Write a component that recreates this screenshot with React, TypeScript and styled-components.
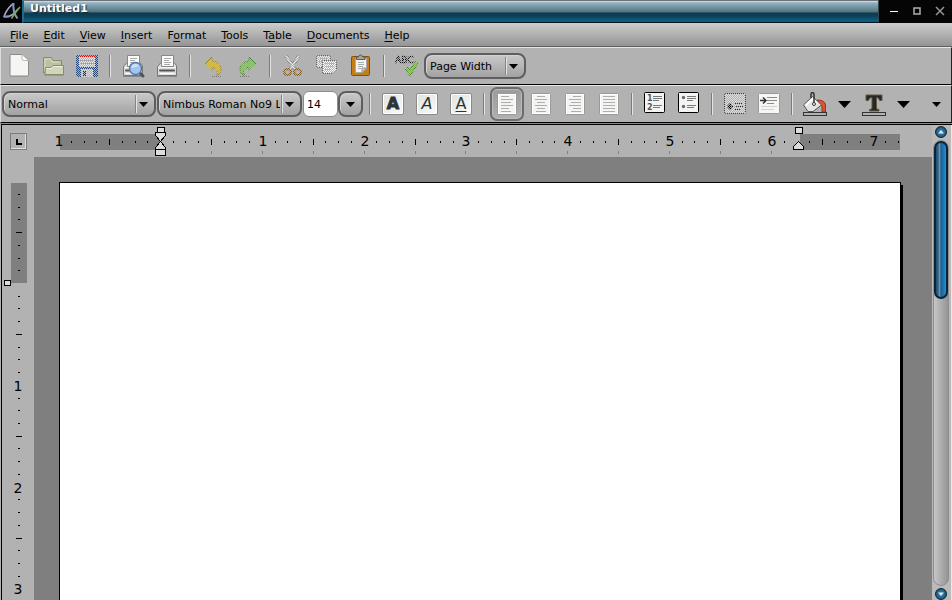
import React from "react";
import styled, { createGlobalStyle, css } from "styled-components";

const GlobalStyle = createGlobalStyle`
  * { box-sizing: border-box; }
  html, body, #root { height: 100%; }
  body { margin: 0; overflow: hidden; background: #b2b2b2; }
  body, button, input, select, textarea {
    font-family: "DejaVu Sans", sans-serif;
    font-size: 11px;
    color: #000;
  }
  button { border: 0; padding: 0; background: none; }
  svg { display: block; flex: none; }
`;

const AppWindow = styled.div`
  display: flex;
  flex-direction: column;
  height: 100vh;
`;

const TitleBar = styled.header`
  display: flex;
  height: 23px;
  background: #050505;
`;

const LogoBox = styled.div`
  width: 22px;
  flex: none;
`;

const TitleStrip = styled.h1`
  flex: 1;
  margin: 0;
  padding: 0 6px;
  font-size: 11px;
  line-height: 15px;
  font-weight: bold;
  color: #fff;
  text-shadow: 1px 1px 1px #123;
  border-top: 1px solid #6f7277;
  border-left: 2px solid #1d6a8e;
  border-right: 1px solid #33444c;
  border-bottom: 1px solid #04161e;
  background: linear-gradient(to bottom, #cfe4ee 0, #8fb0bf 2px, #6d8f9e 7px, #55707b 11px, #0b3c50 12px, #0a4158 15px, #0f5f82 20px, #0d4d68 22px);
`;

const WindowButtons = styled.div`
  display: flex;
  align-items: center;
  width: 73px;
  padding: 0 0 2px 3px;
`;

const WindowButton = styled.button`
  display: grid;
  place-items: center;
  width: 23px;
  height: 20px;
`;

const MenuBar = styled.nav`
  display: flex;
  align-items: center;
  gap: 1px;
  height: 24px;
  padding: 1px 3px 0;
  background: linear-gradient(#cdcdcd, #949494);
  border-bottom: 1px solid #606060;
`;

const MenuItem = styled.button`
  height: 22px;
  padding: 0 7px;
  white-space: nowrap;
  u { text-underline-offset: 2px; }
`;

const Toolbar = styled.div`
  display: flex;
  align-items: center;
  height: 38px;
  padding-left: 1px;
  background: #b2b2b2;
  border-top: 1px solid #e6e6e6;
  border-left: 1px solid #dcdcdc;
  border-bottom: 1px solid #000;
  border-right: 1px solid #222;
`;

const Divider = styled.span`
  width: 2px;
  height: 22px;
  margin: 0 5px;
  flex: none;
  background: linear-gradient(to right, #7b7b7b 50%, #e4e4e4 50%);
`;

const ToolButton = styled.button<{ $off?: boolean; $on?: boolean }>`
  display: grid;
  place-items: center;
  width: 34px;
  height: 34px;
  flex: none;
  ${(p) => p.$on && css`
    border: 2px solid #6c6c6c;
    border-radius: 7px;
    background: linear-gradient(#9a9a9a, #b0b0b0);
    box-shadow: inset 0 0 1px 1px #bcbcbc;
  `}
  ${(p) => p.$off && css`
    svg {
      mask-image: repeating-conic-gradient(#000 0 25%, transparent 0 50%);
      mask-size: 2px 2px;
    }
  `}
`;

const ArrowButton = styled.button`
  display: grid;
  place-items: center;
  width: 25px;
  height: 34px;
  flex: none;
`;

const OverflowButton = styled(ArrowButton)`
  margin-left: auto;
  margin-right: 2px;
`;

const raised = css`
  border: 2px solid #5e5e5e;
  border-radius: 8px;
  background: linear-gradient(#c9c9c9, #a2a2a2);
  box-shadow: inset 1px 1px 0 #d2d2d2;
`;

const Combo = styled.label<{ $w: number }>`
  display: grid;
  align-items: center;
  width: ${(p) => p.$w}px;
  height: 26px;
  margin-right: 1px;
  flex: none;
  ${raised}
  > * { grid-area: 1 / 1; }
`;

const ComboSelect = styled.select`
  appearance: none;
  width: 100%;
  height: 22px;
  padding: 0 20px 0 4px;
  border: 0;
  background: none;
`;

const ComboArrow = styled.span`
  display: flex;
  align-items: center;
  justify-self: end;
  gap: 2px;
  padding-right: 6px;
  pointer-events: none;
`;

const ComboLine = styled.span`
  width: 2px;
  height: 18px;
  background: linear-gradient(to right, #858585 50%, #e4e4e4 50%);
`;

const SizeInput = styled.input`
  width: 35px;
  height: 26px;
  flex: none;
  padding: 0 3px;
  border: 1px solid #8c8c8c;
  border-radius: 6px;
  background: #fff;
`;

const SizeButton = styled.button`
  display: grid;
  place-items: center;
  width: 25px;
  height: 26px;
  flex: none;
  margin-right: 1px;
  ${raised}
`;

const Workspace = styled.main`
  display: grid;
  flex: 1;
  min-height: 0;
  grid-template-columns: 32px 1fr 20px;
  grid-template-rows: 32px 1fr;
  border-left: 1px solid #000;
  border-top: 1px solid #000;
  margin-left: 1px;
  background: #b2b2b2;
`;

const Seam = styled.div`
  height: 1px;
  background: #8a8a8a;
`;

const Corner = styled.div`
  display: grid;
  place-items: start;
  padding: 8px 0 0 8px;
`;

const TabTypeButton = styled.button`
  display: grid;
  place-items: center;
  width: 17px;
  height: 17px;
  border: 1px solid #7c7c7c;
  box-shadow: inset -1px -1px 0 #e2e2e2;
`;

const RulerBox = styled.div`
  min-width: 0;
  min-height: 0;
  overflow: hidden;
`;

const ScrollColumn = styled.div`
  display: flex;
  flex-direction: column;
  align-items: center;
  grid-column: 3;
  grid-row: 1 / 3;
  min-height: 0;
  padding: 1px 3px 0 1px;
  background: #bababa;
  border-right: 1px solid #e8e8e8;
`;

const ScrollArrow = styled.button`
  display: grid;
  place-items: center;
  width: 12px;
  height: 12px;
  flex: none;
  border-radius: 50%;
  border: 1px solid #0c2233;
  background: radial-gradient(#3c8cbb, #12405f);
`;

const Trough = styled.div`
  flex: 1;
  width: 16px;
  margin: 2px 0;
  border: 1px solid #8e8e8e;
  border-radius: 8px;
  background: linear-gradient(to right, #c6c6c6, #949494);
`;

const Thumb = styled.div`
  height: 35.5%;
  border: 2px solid #0b2335;
  border-radius: 7px;
  background: linear-gradient(to right, #1d4f78 0, #34607f 20%, #6b92ac 35%, #1e5f90 50%, #1b78b8 75%, #2391d6 100%);
`;

const Canvas = styled.div`
  display: flex;
  min-width: 0;
  min-height: 0;
  padding: 25px 31px 0 25px;
  background: #7f7f7f;
  overflow: hidden;
`;

const Page = styled.textarea`
  flex: 1;
  min-width: 0;
  padding: 96px;
  resize: none;
  outline: 0;
  border: 1px solid #000;
  border-bottom: 0;
  border-radius: 0;
  background: #fff;
  box-shadow: 2px 3px 0 #000;
  font-family: "Liberation Serif", serif;
  font-size: 19px;
`;

const Icon = ({ children, size = 24 }: { children: React.ReactNode; size?: number }) => (
  <svg width={size} height={size} viewBox={`0 0 ${size} ${size}`} fill="none" aria-hidden="true">
    {children}
  </svg>
);

const Arrow = ({ w, h }: { w: number; h: number }) => (
  <svg width={w} height={h} viewBox={`0 0 ${w} ${h}`} aria-hidden="true">
    <path d={`M0 0H${w}L${w / 2} ${h}Z`} fill="#000" />
  </svg>
);

const Logo = () => (
  <svg width="22" height="22" viewBox="0 0 22 22" fill="none" role="img" aria-label="AbiWord">
    <path d="M13.500 3.500C10 6 6 11 4 16.500C8 17.500 13 15.500 18 9" stroke="#9aabc8" strokeWidth="1.600" />
    <path d="M13.500 3C13 8 14 14 17.500 18.500M4 16.500L9.500 16.500" stroke="#7f97c2" strokeWidth="2" />
    <path d="M20 7L14 14.500L11.500 18.500" stroke="#7da65a" strokeWidth="1.600" />
  </svg>
);

const NewIcon = () => (
  <Icon>
    <path d="M4 .5H15L21.500 6V21a1 1 0 0 1-1 1H4a1 1 0 0 1-1-1V1.500a1 1 0 0 1 1-1Z" fill="#f5f5f3" stroke="#8a8a86" />
    <path d="M15 .5V5q0 1.500 2 1.500H21.500Z" fill="#fff" stroke="#b8b8b4" />
    <path d="M3 22.500H21" stroke="#999" />
  </Icon>
);

const OpenIcon = () => (
  <Icon>
    <path d="M2.500 19V4q0-.5.5-.5H10L12 6.500H20.500V19Z" fill="#bcc2a0" stroke="#858b6d" />
    <path d="M4 17V5H9.500L11 8H19" stroke="#d9dec4" />
    <path d="M4.500 13.500H10L12 11.500H22.500V20.500H4Z" fill="#d0d6b8" stroke="#858b6d" />
    <path d="M5.500 14.500H11L12.500 12.500H21.500" stroke="#eef1df" />
    <path d="M3 21.500H23" stroke="#999" />
  </Icon>
);

const SaveIcon = () => (
  <Icon>
    <path d="M1 1H23V23H3L1 21Z" fill="#264a7c" />
    <path d="M4 2H20V13H4Z" fill="#e6e6e6" />
    <path d="M4 1H20V3H4Z" fill="#d01818" />
    <path d="M5 6.500H19M5 9.500H19" stroke="#999" />
    <path d="M6 15H18V23H6Z" fill="#ddd" />
    <path d="M8 17H11V22H8Z" fill="#234" />
  </Icon>
);

const PrinterBody = () => (
  <>
    <path d="M3.500 11.500L6 8.500H19L21.500 11.500V21.500H2.500V13Z" fill="#dcdcda" stroke="#777" />
    <path d="M6.500 12.500V1.500H18.500V12.500Z" fill="#fafafa" stroke="#888" />
    <path d="M9 4.500H16M9 6.500H14M9 8.500H16M9 10.500H15" stroke="#aaa" />
    <path d="M3 13.500H21" stroke="#f4f4f4" />
    <path d="M5 16.500H19" stroke="#555" strokeWidth="2" strokeLinecap="round" />
    <path d="M5 19.500H19" stroke="#fff" />
    <path d="M2 22.500H22" stroke="#888" />
  </>
);

const PrintIcon = () => <Icon><PrinterBody /></Icon>;

const PreviewIcon = () => (
  <Icon>
    <PrinterBody />
    <path d="M18.500 18.500L22 22" stroke="#4c5358" strokeWidth="3" strokeLinecap="round" />
    <circle cx="14.500" cy="14.500" r="6" fill="#a3c5eb" stroke="#5279a9" strokeWidth="1.500" />
    <path d="M10.500 14a4 4 0 0 1 4-4q3 0 3.500 2Z" fill="#cfe1f6" />
  </Icon>
);

const UndoIcon = () => (
  <Icon>
    <path d="M4 10L11 3V7Q20 8 20 15Q20 20 15 22Q18 17 15 15Q13 13 11 13.500V17Z" fill="#d3bb45" stroke="#978035" />
    <path d="M10 22.500H20" stroke="#777" />
  </Icon>
);

const RedoIcon = () => (
  <Icon>
    <path d="M21 10L14 3V7Q5 8 5 15Q5 20 10 22Q7 17 10 15Q12 13 14 13.500V17Z" fill="#83b862" stroke="#4b7f33" />
    <path d="M5 22.500H15" stroke="#777" />
  </Icon>
);

const CutIcon = () => (
  <Icon>
    <path d="M5 2L14.500 16M18 2L8.500 16" stroke="#888" strokeWidth="4" />
    <path d="M5 2L14.500 16M18 2L8.500 16" stroke="#eee" strokeWidth="2" />
    <ellipse cx="6.500" cy="18" rx="3.500" ry="3" stroke="#7f5522" strokeWidth="2" />
    <ellipse cx="16.500" cy="18" rx="3.500" ry="3" stroke="#7f5522" strokeWidth="2" />
  </Icon>
);

const CopyIcon = () => (
  <Icon>
    <rect x="1.500" y="1.500" width="14" height="12" rx="1" fill="#eee" stroke="#666" />
    <path d="M4 4.500H13M4 7.500H13" stroke="#aaa" />
    <path d="M7.500 6.500H21.500V16L17 19.500H7.500Z" fill="#fff" stroke="#666" />
    <path d="M10 9.500H19M10 12.500H19M10 15.500H16" stroke="#bbb" />
  </Icon>
);

const PasteIcon = () => (
  <Icon>
    <rect x="2.500" y="2.500" width="18" height="19" rx="1" fill="#c47d17" stroke="#85500b" />
    <path d="M6.500 4.500H17.500V14L13 18.500H6.500Z" fill="#f4f4f2" stroke="#aaa" />
    <path d="M17.500 14H13V18.500Z" fill="#ccc" stroke="#999" />
    <path d="M9 8.500H15M9 10.500H15M9 12.500H14M9 14.500H12" stroke="#aaa" />
    <path d="M7.500 5.500V3H9.500Q9.500 1 11.500 1T13.500 3H16V5.500Z" fill="#a5a798" stroke="#5c5d54" />
  </Icon>
);

const SpellIcon = () => (
  <Icon>
    <text x="0" y="9" fontFamily="DejaVu Sans, sans-serif" fontSize="9" fill="#000" stroke="#000" strokeWidth=".5">ABC</text>
    <path d="M11 14L15 19L22 8" stroke="#3d7a18" strokeWidth="4" />
    <path d="M11 14L15 19L22 8" stroke="#7fc050" strokeWidth="2" />
  </Icon>
);

const LetterTile = styled.span<{ $kind: "bold" | "italic" | "underline" }>`
  display: grid;
  place-items: center;
  width: 22px;
  height: 22px;
  border: 1px solid #8a8b88;
  border-radius: 2px;
  background: linear-gradient(135deg, #dfe3de, #fafafa);
  box-shadow: inset 0 0 0 1px #fff;
  color: #2e3436;
  font-size: 16px;
  line-height: 18px;
  font-weight: ${(p) => (p.$kind === "bold" ? 900 : 400)};
  font-style: ${(p) => (p.$kind === "italic" ? "italic" : "normal")};
  text-decoration: ${(p) => (p.$kind === "underline" ? "underline" : "none")};
  text-underline-offset: 2px;
  -webkit-text-stroke: ${(p) => (p.$kind === "bold" ? "1px #2e3436" : "0")};
`;

const alignRows: Record<string, [number, number][]> = {
  left: [[6, 14], [6, 18], [6, 16], [6, 18], [6, 14], [6, 16]],
  center: [[8, 16], [6, 18], [8, 16], [6, 18], [8, 16], [7, 17]],
  right: [[10, 18], [6, 18], [8, 18], [6, 18], [10, 18], [8, 18]],
  justify: [[6, 18], [6, 18], [6, 18], [6, 18], [6, 18], [6, 18]],
};

const AlignIcon = ({ kind }: { kind: string }) => (
  <Icon>
    <rect x="2.500" y="1.500" width="19" height="21" rx="1" fill="#f4f4f2" stroke="#9a9a98" />
    <rect x="3.500" y="2.500" width="17" height="19" stroke="#fff" />
    {alignRows[kind].map(([a, b], i) => (
      <path key={i} d={`M${a} ${4.5 + i * 3}H${b}`} stroke="#adadab" />
    ))}
  </Icon>
);

const ListIcon = ({ numbered }: { numbered?: boolean }) => (
  <Icon>
    <rect x="1.500" y=".5" width="20" height="20" rx="1" fill="#f4f5f3" stroke="#000" />
    {numbered ? (
      <g fontFamily="DejaVu Sans, sans-serif" fontSize="8" fontWeight="bold" fill="#555753">
        <text x="4" y="9">1</text>
        <text x="4" y="18">2</text>
      </g>
    ) : (
      <g fill="#6a6d69"><circle cx="6.500" cy="5.500" r="1.700" /><circle cx="6.500" cy="14.500" r="1.700" /></g>
    )}
    <path d="M10 4.500H19M10 6.500H19M10 8.500H16M10 13.500H19M10 15.500H17" stroke="#777a76" />
  </Icon>
);

const IndentIcon = ({ outdent }: { outdent?: boolean }) => (
  <Icon>
    <rect x="1.500" y="1.500" width="21" height="20" rx="1" fill={outdent ? "#ddd" : "#f6f6f4"} stroke={outdent ? "#444" : "#9a9b97"} />
    {outdent ? (
      <>
        <path d="M5 14.500H10M5 14.500L8 11.500M5 14.500L8 17.500" stroke="#000" strokeWidth="2" />
        <path d="M12 11.500H20M12 14.500H20M12 17.500H17" stroke="#333" />
      </>
    ) : (
      <>
        <path d="M3 8.500H8M6 5.500L9 8.500L6 11.500" stroke="#2e3436" strokeWidth="1.500" />
        <path d="M10 5.500H20M10 8.500H20M10 11.500H17" stroke="#8a8c88" />
        <path d="M4 14.500H20M4 17.500H17" stroke="#d0d0ce" />
      </>
    )}
  </Icon>
);

const FillIcon = () => (
  <Icon>
    <path d="M14 8Q22 8 22.500 13V20H19V14Q18 12 15 13Z" fill="#d95437" stroke="#9f3019" />
    <path d="M.500 13L9.500 4.500L18.500 13L10 19.500H5Z" fill="#e4e5e2" stroke="#555753" />
    <path d="M3 13L9.500 7L14 11" stroke="#fff" strokeWidth="2" />
    <path d="M8 6V2.500Q8 .5 9.500 .5T11 3V11" stroke="#333" strokeWidth="1.500" />
    <circle cx="11" cy="12" r="1.500" fill="#fff" stroke="#333" />
    <rect x=".500" y="20.500" width="23" height="3" fill="#b2b2b2" stroke="#333" />
  </Icon>
);

const FontColorIcon = () => (
  <Icon>
    <path d="M4 3H20V8.500H17.500Q17 5.500 14.500 5.500V16Q14.500 17.500 17 17.500V19H7.500V17.500Q10 17.500 10 16V5.500Q7 5.500 6.500 8.500H4Z" fill="#23272a" stroke="#63583f" strokeWidth="1" />
    <rect x=".500" y="20.500" width="23" height="3" fill="#b2b2b2" stroke="#333" />
  </Icon>
);

const INCH = 101.8;
const EIGHTH = INCH / 8;

const useWindowHeight = () => {
  const [height, setHeight] = React.useState(window.innerHeight);
  React.useEffect(() => {
    const update = () => setHeight(window.innerHeight);
    window.addEventListener("resize", update);
    return () => window.removeEventListener("resize", update);
  }, []);
  return height;
};

/* Horizontal ruler; the zero mark sits at x = 126 within the strip. */
const HorizontalRuler = () => {
  const zero = 126;
  const marks = Array.from({ length: 67 }, (_, k) => k - 8).filter((n) => n !== 0 && n !== 50);
  return (
    <svg width="100%" height="32" shapeRendering="crispEdges" role="img" aria-label="Horizontal ruler">
      <rect x="26" y="9" width="100" height="16" fill="#7f7f7f" />
      <rect x="766" y="9" width="100" height="16" fill="#7f7f7f" />
      {marks.map((n) => {
        const x = Math.round(zero + n * EIGHTH);
        if (x > 864) return null;
        if (n % 8 === 0)
          return (
            <text key={n} x={x + 1} y="21" textAnchor="middle" fontSize="14" fontFamily="DejaVu Sans, sans-serif">
              {Math.abs(n / 8)}
            </text>
          );
        return n % 4 === 0 ? (
          <rect key={n} x={x} y="14" width="1" height="6" />
        ) : (
          <rect key={n} x={x} y="16" width="1" height="2" />
        );
      })}
      {Array.from({ length: 12 }, (_, k) => (
        <rect key={k} x={Math.round(zero + ((k + 1) * INCH) / 2)} y="26" width="1" height="3" fill="#7f7f7f" />
      ))}
      <g fill="#dcdcdc" stroke="#000">
        <rect x="123.500" y="2.500" width="7" height="5" />
        <path d="M121.500 7.500H131.500V10.500L126.500 16.500L121.500 10.500Z" />
        <path d="M126.500 16.500L131.500 22.500V24.500H121.500V22.500Z" />
        <rect x="121.500" y="24.500" width="10" height="6" />
        <rect x="761.500" y="2.500" width="7" height="6" />
        <path d="M764.500 16.500L769.500 21.500V24.500H759.500V21.500Z" />
      </g>
    </svg>
  );
};

/* Vertical ruler; the zero mark sits at y = 126 within the strip. */
const VerticalRuler = () => {
  const zero = 126;
  const visible = useWindowHeight() - 164 - zero;
  const count = Math.max(8, Math.floor(visible / EIGHTH) + 8);
  const marks = Array.from({ length: count }, (_, k) => k - 7).filter((n) => n !== 0);
  return (
    <svg width="32" height="100%" shapeRendering="crispEdges" role="img" aria-label="Vertical ruler">
      <rect x="9" y="26" width="16" height="100" fill="#7f7f7f" />
      {marks.map((n) => {
        const y = Math.round(zero + n * EIGHTH);
        if (n % 8 === 0)
          return (
            <text key={n} x="16" y={y + 6} textAnchor="middle" fontSize="14" fontFamily="DejaVu Sans, sans-serif">
              {n / 8}
            </text>
          );
        return n % 4 === 0 ? (
          <rect key={n} x="14" y={y} width="6" height="1" />
        ) : (
          <rect key={n} x="16" y={y} width="2" height="1" />
        );
      })}
      <rect x="2.500" y="123.500" width="6" height="5" fill="#dcdcdc" stroke="#000" />
    </svg>
  );
};

const menus: [string, string, string][] = [
  ["", "F", "ile"],
  ["", "E", "dit"],
  ["", "V", "iew"],
  ["", "I", "nsert"],
  ["F", "o", "rmat"],
  ["", "T", "ools"],
  ["T", "a", "ble"],
  ["", "D", "ocuments"],
  ["", "H", "elp"],
];

const Dropdown = ({ label, value, width }: { label: string; value: string; width: number }) => (
  <Combo $w={width}>
    <ComboSelect aria-label={label} defaultValue={value}>
      <option>{value}</option>
    </ComboSelect>
    <ComboArrow>
      <ComboLine />
      <Arrow w={9} h={5} />
    </ComboArrow>
  </Combo>
);

export default function App() {
  const [align, setAlign] = React.useState("left");
  return (
    <AppWindow>
      <GlobalStyle />
      <TitleBar>
        <LogoBox><Logo /></LogoBox>
        <TitleStrip>Untitled1</TitleStrip>
        <WindowButtons>
          <WindowButton aria-label="Minimize">
            <Icon size={10}><path d="M1 5.500H9" stroke="#fff" /></Icon>
          </WindowButton>
          <WindowButton aria-label="Maximize">
            <Icon size={10}><path d="M2 2H8V8H2Z" stroke="#b5aeae" strokeWidth="1.500" /></Icon>
          </WindowButton>
          <WindowButton aria-label="Close">
            <Icon size={10}><path d="M1 1L9 9M9 1L1 9" stroke="#9a9696" strokeWidth="1.500" /></Icon>
          </WindowButton>
        </WindowButtons>
      </TitleBar>

      <MenuBar aria-label="Menu">
        {menus.map(([a, b, c]) => (
          <MenuItem key={a + b + c}>{a}<u>{b}</u>{c}</MenuItem>
        ))}
      </MenuBar>

      <Toolbar role="toolbar" aria-label="Standard">
        <ToolButton aria-label="New"><NewIcon /></ToolButton>
        <ToolButton aria-label="Open"><OpenIcon /></ToolButton>
        <ToolButton aria-label="Save" disabled $off><SaveIcon /></ToolButton>
        <Divider />
        <ToolButton aria-label="Print preview"><PreviewIcon /></ToolButton>
        <ToolButton aria-label="Print"><PrintIcon /></ToolButton>
        <Divider />
        <ToolButton aria-label="Undo" disabled $off><UndoIcon /></ToolButton>
        <ToolButton aria-label="Redo" disabled $off><RedoIcon /></ToolButton>
        <Divider />
        <ToolButton aria-label="Cut" disabled $off><CutIcon /></ToolButton>
        <ToolButton aria-label="Copy" disabled $off><CopyIcon /></ToolButton>
        <ToolButton aria-label="Paste"><PasteIcon /></ToolButton>
        <Divider />
        <ToolButton aria-label="Spelling" disabled $off><SpellIcon /></ToolButton>
        <Dropdown label="Zoom" value="Page Width" width={102} />
      </Toolbar>

      <Toolbar role="toolbar" aria-label="Formatting">
        <Dropdown label="Style" value="Normal" width={154} />
        <Dropdown label="Font" value="Nimbus Roman No9 L" width={145} />
        <SizeInput aria-label="Font size" defaultValue="14" />
        <SizeButton aria-label="Font sizes"><Arrow w={9} h={5} /></SizeButton>
        <Divider />
        <ToolButton aria-label="Bold"><LetterTile $kind="bold">A</LetterTile></ToolButton>
        <ToolButton aria-label="Italic"><LetterTile $kind="italic">A</LetterTile></ToolButton>
        <ToolButton aria-label="Underline"><LetterTile $kind="underline">A</LetterTile></ToolButton>
        <Divider />
        {Object.keys(alignRows).map((k) => (
          <ToolButton key={k} aria-label={`Align ${k}`} aria-pressed={align === k} $on={align === k} onClick={() => setAlign(k)}>
            <AlignIcon kind={k} />
          </ToolButton>
        ))}
        <Divider />
        <ToolButton aria-label="Numbered list"><ListIcon numbered /></ToolButton>
        <ToolButton aria-label="Bulleted list"><ListIcon /></ToolButton>
        <Divider />
        <ToolButton aria-label="Decrease indent" disabled $off><IndentIcon outdent /></ToolButton>
        <ToolButton aria-label="Increase indent"><IndentIcon /></ToolButton>
        <Divider />
        <ToolButton aria-label="Highlight"><FillIcon /></ToolButton>
        <ArrowButton aria-label="Highlight colors"><Arrow w={13} h={7} /></ArrowButton>
        <ToolButton aria-label="Font color"><FontColorIcon /></ToolButton>
        <ArrowButton aria-label="Font colors"><Arrow w={13} h={7} /></ArrowButton>
        <OverflowButton aria-label="More"><Arrow w={9} h={5} /></OverflowButton>
      </Toolbar>
      <Seam />

      <Workspace>
        <Corner>
          <TabTypeButton aria-label="Tab type">
            <Icon size={6}><path d="M1 0V5H6" stroke="#000" strokeWidth="2" /></Icon>
          </TabTypeButton>
        </Corner>
        <RulerBox><HorizontalRuler /></RulerBox>
        <ScrollColumn>
          <ScrollArrow aria-label="Scroll up">
            <Icon size={6}><path d="M0 4.500L3 1L6 4.500Z" fill="#dbe9f2" /></Icon>
          </ScrollArrow>
          <Trough role="scrollbar" aria-label="Document" aria-controls="page" aria-valuenow={0} aria-orientation="vertical">
            <Thumb />
          </Trough>
          <ScrollArrow aria-label="Scroll down">
            <Icon size={6}><path d="M0 1.500L3 5L6 1.500Z" fill="#dbe9f2" /></Icon>
          </ScrollArrow>
        </ScrollColumn>
        <RulerBox><VerticalRuler /></RulerBox>
        <Canvas><Page id="page" aria-label="Document text" /></Canvas>
      </Workspace>
    </AppWindow>
  );
}
